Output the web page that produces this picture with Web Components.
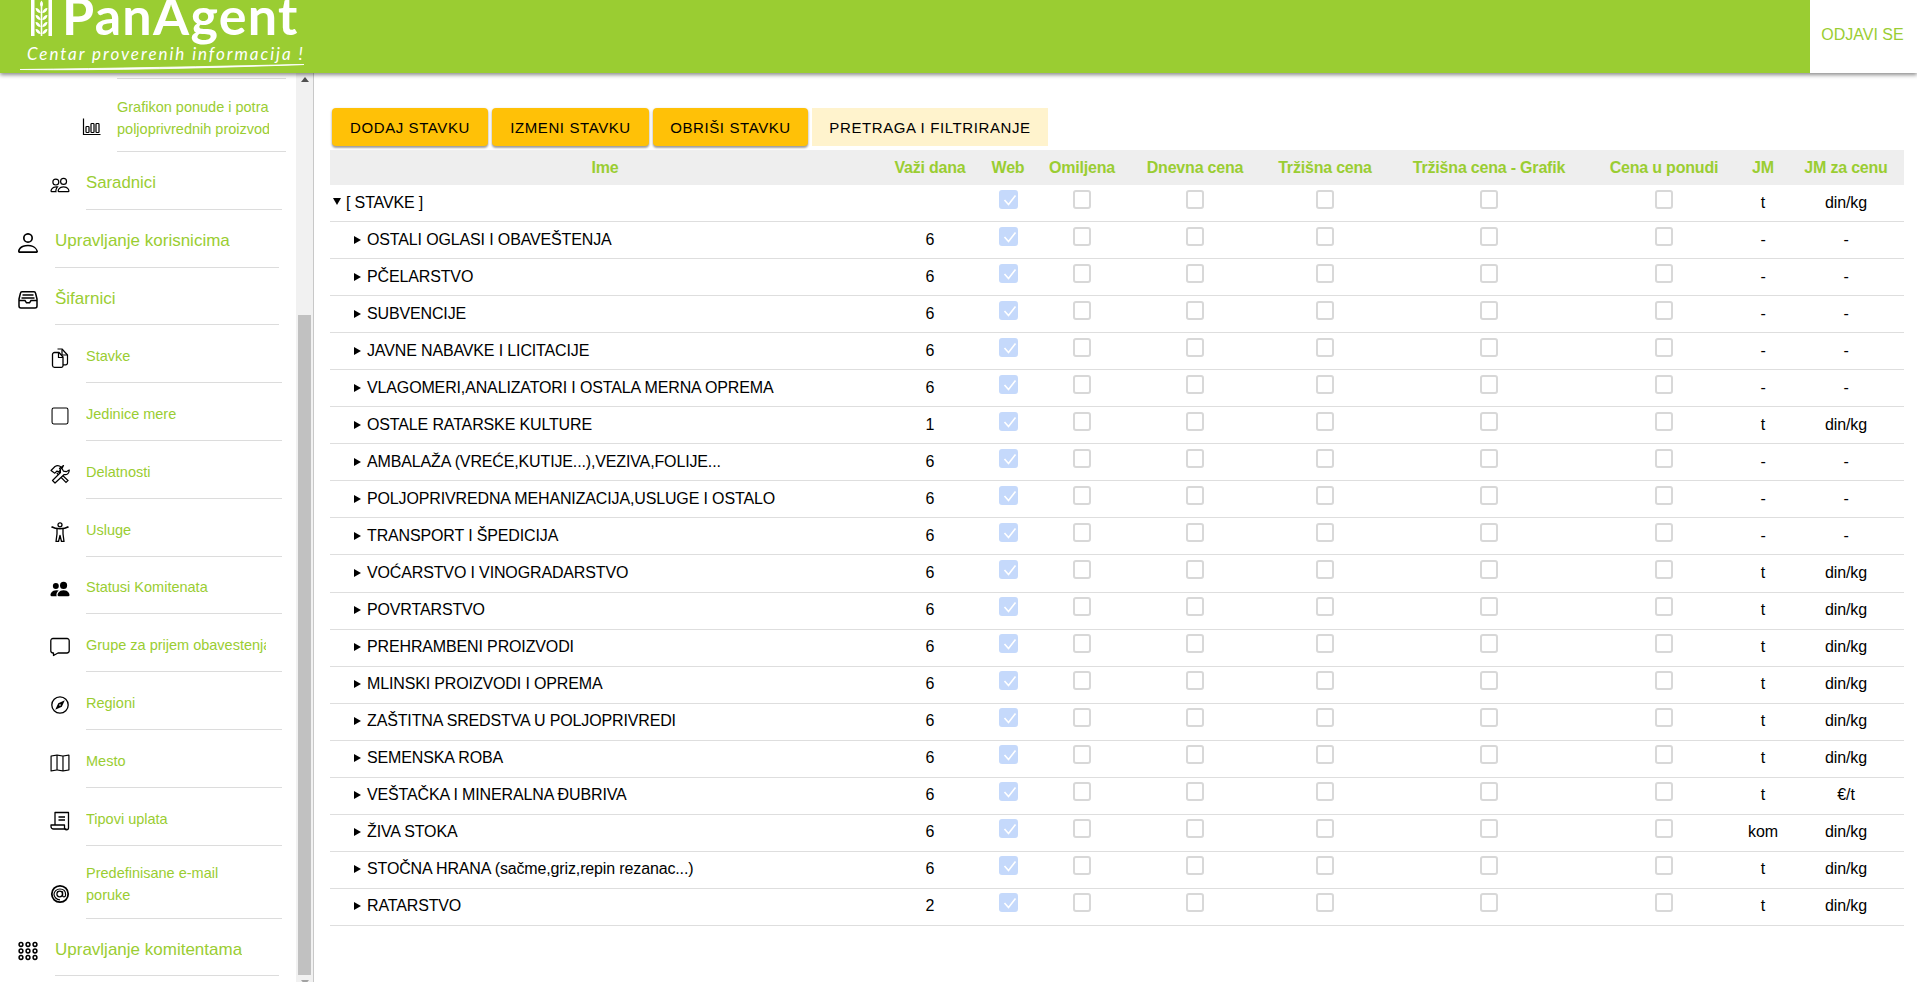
<!DOCTYPE html>
<html lang="sr">
<head>
<meta charset="utf-8">
<title>PanAgent</title>
<style>
  html, body { margin: 0; height: 100%; overflow: hidden; }
  body { font-family: "Liberation Sans", Arial, sans-serif; }
</style>
</head>
<body>
<pa-app></pa-app>
<script>
// filled 16x16 icon paths, scaled around the middle of the 20x20 box
const solid = (d, sx, sy = sx) =>
  `<path transform="translate(${10 - 8 * sx} ${10 - 8 * sy}) scale(${sx} ${sy})" d="${d}" fill="#000" stroke="none"/>`;

const ICONS = {
  chart: '<path d="M1.500 1.500v16h17" stroke-width="1.200"/><rect x="4" y="9.500" width="3" height="6" rx=".8" stroke-width="1.200"/><rect x="9" y="6.500" width="3" height="9" rx=".8" stroke-width="1.200"/><rect x="14" y="6.500" width="3" height="9" rx=".8" stroke-width="1.200"/>',
  people: solid("M15 14s1 0 1-1-1-4-5-4-5 3-5 4 1 1 1 1zm-7.978-1L7 12.996c.001-.264.167-1.03.76-1.72C8.312 10.629 9.282 10 11 10c1.717 0 2.687.63 3.24 1.276.593.69.758 1.457.76 1.72l-.008.002-.014.002H7.022ZM11 7a2 2 0 1 0 0-4 2 2 0 0 0 0 4m3-2a3 3 0 1 1-6 0 3 3 0 0 1 6 0M6.936 9.28a6 6 0 0 0-1.23-.247A7 7 0 0 0 5 9c-4 0-5 3-5 4q0 1 1 1h4.216A2.240 2.240 0 0 1 5 13c0-1.010.377-2.042 1.090-2.904.243-.294.526-.569.846-.816M4.920 10A5.500 5.500 0 0 0 4 13H1c0-.26.164-1.030.76-1.724.545-.636 1.492-1.256 3.160-1.275ZM1.500 5.500a3 3 0 1 1 6 0 3 3 0 0 1-6 0m3-2a2 2 0 1 0 0 4 2 2 0 0 0 0-4", 1.19),
  person: solid("M8 8a3 3 0 1 0 0-6 3 3 0 0 0 0 6m2-3a2 2 0 1 1-4 0 2 2 0 0 1 4 0m4 8c0 1-1 1-1 1H3s-1 0-1-1 1-4 6-4 6 4 6 4m-1-.004c-.001-.246-.154-.986-.832-1.664C11.516 10.680 10.289 10 8 10s-3.516.68-4.168 1.332c-.678.678-.83 1.418-.832 1.664z", 1.667),
  inbox: '<path d="M4 1.800h12a1.500 1.500 0 0 1 1.500 1.200L19 9v7a2 2 0 0 1-2 2H3a2 2 0 0 1-2-2V9l1.500-6A1.500 1.500 0 0 1 4 1.800z" stroke-width="1.500" stroke-linejoin="round"/><path d="M1 10.500h6l1.500 2.300h3l1.500-2.300h6" stroke-width="1.500"/><path d="M4.500 5h11M3.500 8h13" stroke-width="1.500"/>',
  files: '<path d="M7.500 1h4.500l5.500 6v8a1.800 1.800 0 0 1-1.800 1.800H13" stroke-width="1.200" stroke-linejoin="round"/><path d="M12 1.500v5.500h5" stroke-width="1.200"/><path d="M4.500 4.500H9l4 4.500v8.800a1.500 1.500 0 0 1-1.500 1.500h-7A2 2 0 0 1 2.500 17.500V6.500a2 2 0 0 1 2-2z" stroke-width="1.300" stroke-linejoin="round"/><path d="M8.500 4.500v5H13" stroke-width="1.200"/>',
  square: solid("M14 1a1 1 0 0 1 1 1v12a1 1 0 0 1-1 1H2a1 1 0 0 1-1-1V2a1 1 0 0 1 1-1zM2 0a2 2 0 0 0-2 2v12a2 2 0 0 0 2 2h12a2 2 0 0 0 2-2V2a2 2 0 0 0-2-2z", 1.06),
  tools: '<path d="M1 6.500 5 2.500c2-1.200 4.500-.8 6 .5L9.500 4.500l1 1.500-2 2L7 7l-2.200 2.200z" stroke-width="1.200" stroke-linejoin="round"/><path d="M8.500 7.500 18 16.500 16 18.500 6.800 9" stroke-width="1.200"/><path d="m13.500 1.500-1.500 3 1.500 2.700 2.700.5 3-1.700c.3 2.800-2 5.200-5 4.500L5 19 2.500 16.500l8-8c-.6-3 1-6.200 3-7z" stroke-width="1.200" stroke-linejoin="round" fill="#fff"/>',
  access: '<circle cx="10" cy="2.800" r="2" stroke-width="1.300"/><path d="M1.500 4.800c2.500 1.500 5 2 8.500 2s6-.5 8.500-2" stroke-width="1.600"/><path d="M7 6.800v5L6 19.500h2.500L10 13.500l1.500 6H14l-1-7.700v-5" stroke-width="1.300" stroke-linejoin="round"/>',
  peoplefill: solid("M7 14s-1 0-1-1 1-4 5-4 5 3 5 4-1 1-1 1zm4-6a3 3 0 1 0 0-6 3 3 0 0 0 0 6m-5.784 6A2.240 2.240 0 0 1 5 13c0-1.355.68-2.750 1.936-3.720A6.300 6.300 0 0 0 5 9c-4 0-5 3-5 4s1 1 1 1zM4.500 8a2.500 2.500 0 1 0 0-5 2.500 2.500 0 0 0 0 5", 1.19),
  chat: '<path d="M3 1.500h14A2.200 2.200 0 0 1 19.200 3.700v10A2.200 2.200 0 0 1 17 16H8l-4.500 2.500V16H3A2.200 2.200 0 0 1 .8 13.700v-10A2.200 2.200 0 0 1 3 1.500z" stroke-width="1.300" stroke-linejoin="round"/>',
  compass: '<circle cx="10" cy="10" r="8.200" stroke-width="1.300"/><path d="m14.800 5.200-6.500 3-3.100 6.600 6.600-3.100zM10 9l1 1-1 1-1-1z" fill="#000" stroke="none"/>',
  map: solid("M15.817.113A.5.5 0 0 1 16 .5v14a.5.5 0 0 1-.402.49l-5 1a.5.5 0 0 1-.196 0L5.500 15.010l-4.902.98A.5.5 0 0 1 0 15.500v-14a.5.5 0 0 1 .402-.49l5-1a.5.5 0 0 1 .196 0L10.500.99l4.902-.98a.5.5 0 0 1 .415.103M10 1.910l-4-.8v12.980l4 .8zm1 12.980 4-.8V1.110l-4 .8zm-6-.8V1.110l-4 .8v12.980z", 1.19, 1.06),
  receipt: '<path d="M5 14V1.500h13.500V16.800a2 2 0 0 1-4 0V14H1v1.500A2.500 2.500 0 0 0 3.500 18h13" stroke-width="1.300" stroke-linejoin="round"/><path d="M8.500 6h6.500M8.500 9h6.500" stroke-width="1.300"/>',
  at: '<circle cx="10" cy="10" r="8.200" stroke-width="1.800"/><circle cx="9.700" cy="10" r="2.800" stroke-width="1.300"/><path d="M12.600 7.200v4.300c0 2 3 2 3-.8 0-3.600-2.400-5.700-5.700-5.700S4 7.500 4 10.200 6.500 15.800 10 15.800" stroke-width="1.200"/>',
  grid: '<g stroke-width="1.500"><circle cx="3" cy="3.500" r="1.900"/><circle cx="10" cy="3.500" r="1.900"/><circle cx="17" cy="3.500" r="1.900"/><circle cx="3" cy="10" r="1.900"/><circle cx="10" cy="10" r="1.900"/><circle cx="17" cy="10" r="1.900"/><circle cx="3" cy="16.500" r="1.900"/><circle cx="10" cy="16.500" r="1.900"/><circle cx="17" cy="16.500" r="1.900"/></g>'
};

class PaIcon extends HTMLElement {
  connectedCallback() {
    this.attachShadow({ mode: "open" }).innerHTML = `
    <style>:host { display: block; line-height: 0; } svg { fill: none; stroke: #000; stroke-width: 1; }</style>
    <svg width="20" height="20" viewBox="0 0 20 20">${ICONS[this.getAttribute("name")]}</svg>`;
  }
}

class PaNavItem extends HTMLElement {
  connectedCallback() {
    const h = this.getAttribute("h") || "57.8";
    this.attachShadow({ mode: "open" }).innerHTML = `
    <style>
    :host { display: block; flex: none; }
    #row { display: flex; height: ${h}px; box-sizing: border-box; }
    #ic { flex: none; display: flex; justify-content: center; align-items: center; box-sizing: border-box; padding-top: 8px; }
    :host([h]) #ic { padding-top: 23px; }
    #line { flex: none; box-sizing: border-box; height: 100%; display: flex; align-items: center; border-bottom: 1px solid #dcdcdc; padding-top: 5px; }
    #txt { overflow: hidden; white-space: nowrap; color: yellowgreen; line-height: 22px; }
    :host([level="0"]) #ic { width: 55px; }
    :host([level="0"]) #line { width: 224px; padding-top: 6px; }
    :host([level="0"]) #txt { font-size: 17px; }
    :host([level="1"]) #ic { width: 86px; padding-left: 33px; }
    :host([level="1"]) #line { width: 196px; }
    :host([level="1"]) #txt { font-size: 14.500px; width: 179.500px; }
    :host([level="2"]) #ic { width: 117px; padding-left: 66px; }
    :host([level="2"]) #line { width: 169px; }
    :host([level="2"]) #txt { font-size: 14.500px; width: 151.500px; }
    :host([big]) #txt { font-size: 16.800px; }
    </style>
    <div id="row">
      <div id="ic"><slot name="icon"></slot></div>
      <div id="line"><div id="txt"><slot></slot></div></div>
    </div>`;
  }
}

class PaScrollbar extends HTMLElement {
  connectedCallback() {
    this.attachShadow({ mode: "open" }).innerHTML = `
    <style>
    :host { display: flex; flex-direction: column; width: 17px; flex: none; background: #f1f1f1; align-items: center; }
    #up { flex: none; height: 17px; display: flex; justify-content: center; padding-top: 4px; box-sizing: border-box; }
    #space { flex: none; height: 225px; }
    #thumb { flex: none; width: 13px; height: 660px; background: #c1c1c1; }
    #down { flex: none; height: 7px; display: flex; justify-content: center; padding-top: 5px; box-sizing: border-box; overflow: hidden; }
    i { display: block; width: 0; height: 0; border: 4px solid transparent; border-top: 0; border-bottom: 5px solid #505050; }
    #down i { border-bottom: 0; border-top: 5px solid #a3a3a3; }
    </style>
    <div id="up"><i></i></div>
    <div id="space"></div>
    <div id="thumb"></div>
    <div id="down"><i></i></div>`;
  }
}

class PaSidebar extends HTMLElement {
  connectedCallback() {
    this.attachShadow({ mode: "open" }).innerHTML = `
    <style>
    :host { display: flex; width: 314px; flex: none; box-sizing: border-box; border-right: 1px solid #c8c8c8; height: 100%; overflow: hidden; }
    #list { flex: none; width: 296px; display: flex; flex-direction: column; }
    #top { flex: none; height: 6px; margin-left: 117px; width: 169px; border-bottom: 1px solid #dcdcdc; box-sizing: border-box; }
    </style>
    <div id="list">
      <div id="top"></div>
      <slot></slot>
    </div>
    <pa-scrollbar></pa-scrollbar>`;
  }
}

class PaLogo extends HTMLElement {
  connectedCallback() {
    this.attachShadow({ mode: "open" }).innerHTML = `
    <style>
    :host { display: block; position: relative; width: 314px; height: 73px; overflow: hidden; color: #fff; }
    #name { position: absolute; left: 62px; top: -9px; font: 700 52px/48px Lato, "Open Sans", sans-serif; letter-spacing: 1.300px; white-space: nowrap; }
    #tag { position: absolute; left: 27px; top: 45px; font: italic 17px/18px Lato, sans-serif; letter-spacing: 1.950px; white-space: nowrap; }
    svg { position: absolute; }
    </style>
    <svg style="left:31px;top:0" width="21" height="36" viewBox="0 0 21 36">
      <path d="M0 0h3.500v36H0zM17.500 0H21v36h-3.500z" fill="#fff"/>
      <path d="M10.500 4v32" stroke="#fff" stroke-width="1.600"/>
      <g fill="#fff">
        <path d="M10.500 .5c2 2 2 5 0 7-2-2-2-5 0-7z"/>
        <path d="M9.800 13c-2.800 0-5-1.800-5.300-5 2.800 0 4.800 2 5.300 5zM11.200 13c.5-3 2.500-5 5.300-5-.3 3.200-2.500 5-5.300 5zM9.800 20c-2.800 0-5-1.800-5.300-5 2.800 0 4.800 2 5.300 5zM11.200 20c.5-3 2.500-5 5.300-5-.3 3.200-2.500 5-5.300 5zM9.800 27c-2.800 0-5-1.800-5.300-5 2.800 0 4.800 2 5.300 5zM11.200 27c.5-3 2.500-5 5.300-5-.3 3.200-2.500 5-5.300 5zM9.800 34c-2.800 0-5-1.800-5.300-5 2.800 0 4.800 2 5.300 5zM11.200 34c.5-3 2.500-5 5.300-5-.3 3.200-2.500 5-5.300 5z"/>
      </g>
    </svg>
    <div id="name">PanAgent</div>
    <div id="tag">Centar proverenih informacija !</div>
    <svg style="left:19px;top:62px" width="286" height="10" viewBox="0 0 286 10">
      <path d="M1 7.500C90 6.500 190 4.500 285 2.500 190 6 90 8.500 1 7.500z" fill="#fff" stroke="#fff" stroke-width=".9"/>
    </svg>`;
  }
}

class PaHeader extends HTMLElement {
  connectedCallback() {
    this.attachShadow({ mode: "open" }).innerHTML = `
    <style>
    :host { display: flex; flex: none; height: 73px; background: yellowgreen; box-shadow: 0 2px 4px rgba(0,0,0,.45); position: relative; z-index: 2; }
    #space { flex: 1; }
    #out { flex: none; width: 107px; background: #fff; color: yellowgreen; font-size: 16px; display: flex; align-items: center; justify-content: center; padding: 0 2px 3px 0; box-sizing: border-box; white-space: nowrap; }
    </style>
    <pa-logo></pa-logo>
    <div id="space"></div>
    <div id="out">ODJAVI SE</div>`;
  }
}

class PaButton extends HTMLElement {
  connectedCallback() {
    this.attachShadow({ mode: "open" }).innerHTML = `
    <style>
    :host { display: flex; align-items: center; justify-content: center; box-sizing: border-box; height: 38px; background: #ffc107; border-radius: 4px; color: #000; font-size: 15px; letter-spacing: .6px; white-space: nowrap; box-shadow: 0 2px 2px rgba(0,0,0,.28), 0 1px 3px rgba(0,0,0,.2); }
    :host([flat]) { background: #fff3cd; border-radius: 0; box-shadow: none; }
    </style>
    <slot></slot>`;
  }
}

class PaCheck extends HTMLElement {
  connectedCallback() {
    const on = this.hasAttribute("checked");
    this.attachShadow({ mode: "open" }).innerHTML = `
    <style>
    :host { display: block; width: 19px; height: 19px; box-sizing: border-box; border-radius: 3px; margin-top: -7px; }
    :host([checked]) { background: #c5d9fb; }
    :host(:not([checked])) { border: 2px solid #d8d8d8; background: #fff; width: 18px; }
    svg { display: block; }
    </style>
    ${on ? '<svg width="19" height="19" viewBox="0 0 19 19"><path d="m5.500 10 4 4.500 7-9" fill="none" stroke="#fff" stroke-width="1.600"/></svg>' : ""}`;
  }
}

const COLS = "550px 100px 56px 92px 134px 126px 202px 148px 50px 116px";

class PaTableHead extends HTMLElement {
  connectedCallback() {
    const labels = ["Ime", "Važi dana", "Web", "Omiljena", "Dnevna cena", "Tržišna cena", "Tržišna cena - Grafik", "Cena u ponudi", "JM", "JM za cenu"];
    this.attachShadow({ mode: "open" }).innerHTML = `
    <style>
    :host { display: grid; grid-template-columns: ${COLS}; height: 35px; background: #eee; color: yellowgreen; font-size: 16px; letter-spacing: -.2px; font-weight: bold; align-items: center; text-align: center; }
    div { white-space: nowrap; }
    </style>
    ${labels.map(l => `<div>${l}</div>`).join("")}`;
  }
}

class PaTableRow extends HTMLElement {
  connectedCallback() {
    const days = this.getAttribute("days") || "";
    const jm = this.getAttribute("jm") || "-";
    const jmc = this.getAttribute("jmc") || "-";
    this.attachShadow({ mode: "open" }).innerHTML = `
    <style>
    :host { display: grid; grid-template-columns: ${COLS}; height: 37.050px; box-sizing: border-box; padding-bottom: 1px; border-bottom: 1px solid #dedede; align-items: center; justify-items: center; font-size: 16px; letter-spacing: -.14px; color: #000; }
    #name { justify-self: stretch; display: flex; align-items: center; white-space: nowrap; box-sizing: border-box; }
    :host([depth="0"]) #name { padding-left: 3px; }
    :host([depth="1"]) #name { padding-left: 24px; }
    i { display: block; flex: none; width: 0; height: 0; border: solid transparent; }
    :host([depth="1"]) i { border-width: 4px 0 4px 7px; border-left-color: #000; margin-right: 6px; }
    :host([depth="0"]) i { border-width: 7px 4px 0 4px; border-top-color: #000; margin-right: 5px; margin-top: -2px; }
    </style>
    <div id="name"><i></i><slot></slot></div>
    <div>${days}</div>
    <pa-check checked></pa-check>
    <pa-check></pa-check><pa-check></pa-check><pa-check></pa-check><pa-check></pa-check><pa-check></pa-check>
    <div>${jm}</div>
    <div>${jmc}</div>`;
  }
}

class PaApp extends HTMLElement {
  connectedCallback() {
    const nav = [
      [2, "chart", "Grafikon ponude i potražnje<br>poljoprivrednih proizvoda", 73],
      [1, "people", "Saradnici", 0, true],
      [0, "person", "Upravljanje korisnicima"],
      [0, "inbox", "Šifarnici"],
      [1, "files", "Stavke"],
      [1, "square", "Jedinice mere"],
      [1, "tools", "Delatnosti"],
      [1, "access", "Usluge"],
      [1, "peoplefill", "Statusi Komitenata"],
      [1, "chat", "Grupe za prijem obavestenja"],
      [1, "compass", "Regioni"],
      [1, "map", "Mesto"],
      [1, "receipt", "Tipovi uplata"],
      [1, "at", "Predefinisane e-mail<br>poruke", 73],
      [0, "grid", "Upravljanje komitentama"]
    ];
    const rows = [
      ["[ STAVKE ]", "", "t", "din/kg"],
      ["OSTALI OGLASI I OBAVEŠTENJA", 6],
      ["PČELARSTVO", 6],
      ["SUBVENCIJE", 6],
      ["JAVNE NABAVKE I LICITACIJE", 6],
      ["VLAGOMERI,ANALIZATORI I OSTALA MERNA OPREMA", 6],
      ["OSTALE RATARSKE KULTURE", 1, "t", "din/kg"],
      ["AMBALAŽA (VREĆE,KUTIJE...),VEZIVA,FOLIJE...", 6],
      ["POLJOPRIVREDNA MEHANIZACIJA,USLUGE I OSTALO", 6],
      ["TRANSPORT I ŠPEDICIJA", 6],
      ["VOĆARSTVO I VINOGRADARSTVO", 6, "t", "din/kg"],
      ["POVRTARSTVO", 6, "t", "din/kg"],
      ["PREHRAMBENI PROIZVODI", 6, "t", "din/kg"],
      ["MLINSKI PROIZVODI I OPREMA", 6, "t", "din/kg"],
      ["ZAŠTITNA SREDSTVA U POLJOPRIVREDI", 6, "t", "din/kg"],
      ["SEMENSKA ROBA", 6, "t", "din/kg"],
      ["VEŠTAČKA I MINERALNA ĐUBRIVA", 6, "t", "€/t"],
      ["ŽIVA STOKA", 6, "kom", "din/kg"],
      ["STOČNA HRANA (sačme,griz,repin rezanac...)", 6, "t", "din/kg"],
      ["RATARSTVO", 2, "t", "din/kg"]
    ];
    this.attachShadow({ mode: "open" }).innerHTML = `
    <style>
    :host { display: flex; flex-direction: column; height: 982px; }
    #body { flex: 1; display: flex; min-height: 0; }
    main { flex: 1; padding: 35px 13px 0 16px; min-width: 0; }
    #buttons { display: flex; gap: 4px; margin-left: 2px; margin-bottom: 4px; }
    </style>
    <pa-header></pa-header>
    <div id="body">
      <pa-sidebar>
        ${nav.map(([level, icon, text, h, big]) => `<pa-nav-item level="${level}" ${h ? `h="${h}"` : ""} ${big ? "big" : ""}><pa-icon slot="icon" name="${icon}"></pa-icon>${text}</pa-nav-item>`).join("")}
      </pa-sidebar>
      <main>
        <div id="buttons">
          <pa-button style="width:156px">DODAJ STAVKU</pa-button>
          <pa-button style="width:157px">IZMENI STAVKU</pa-button>
          <pa-button style="width:155px">OBRIŠI STAVKU</pa-button>
          <pa-button style="width:236px" flat>PRETRAGA I FILTRIRANJE</pa-button>
        </div>
        <pa-table-head></pa-table-head>
        ${rows.map(([name, days, jm, jmc], i) => `<pa-table-row depth="${i ? 1 : 0}" days="${days}" ${jm ? `jm="${jm}" jmc="${jmc}"` : ""}>${name}</pa-table-row>`).join("")}
      </main>
    </div>`;
  }
}

customElements.define("pa-icon", PaIcon);
customElements.define("pa-nav-item", PaNavItem);
customElements.define("pa-scrollbar", PaScrollbar);
customElements.define("pa-sidebar", PaSidebar);
customElements.define("pa-logo", PaLogo);
customElements.define("pa-header", PaHeader);
customElements.define("pa-button", PaButton);
customElements.define("pa-check", PaCheck);
customElements.define("pa-table-head", PaTableHead);
customElements.define("pa-table-row", PaTableRow);
customElements.define("pa-app", PaApp);
</script>
</body>
</html>
